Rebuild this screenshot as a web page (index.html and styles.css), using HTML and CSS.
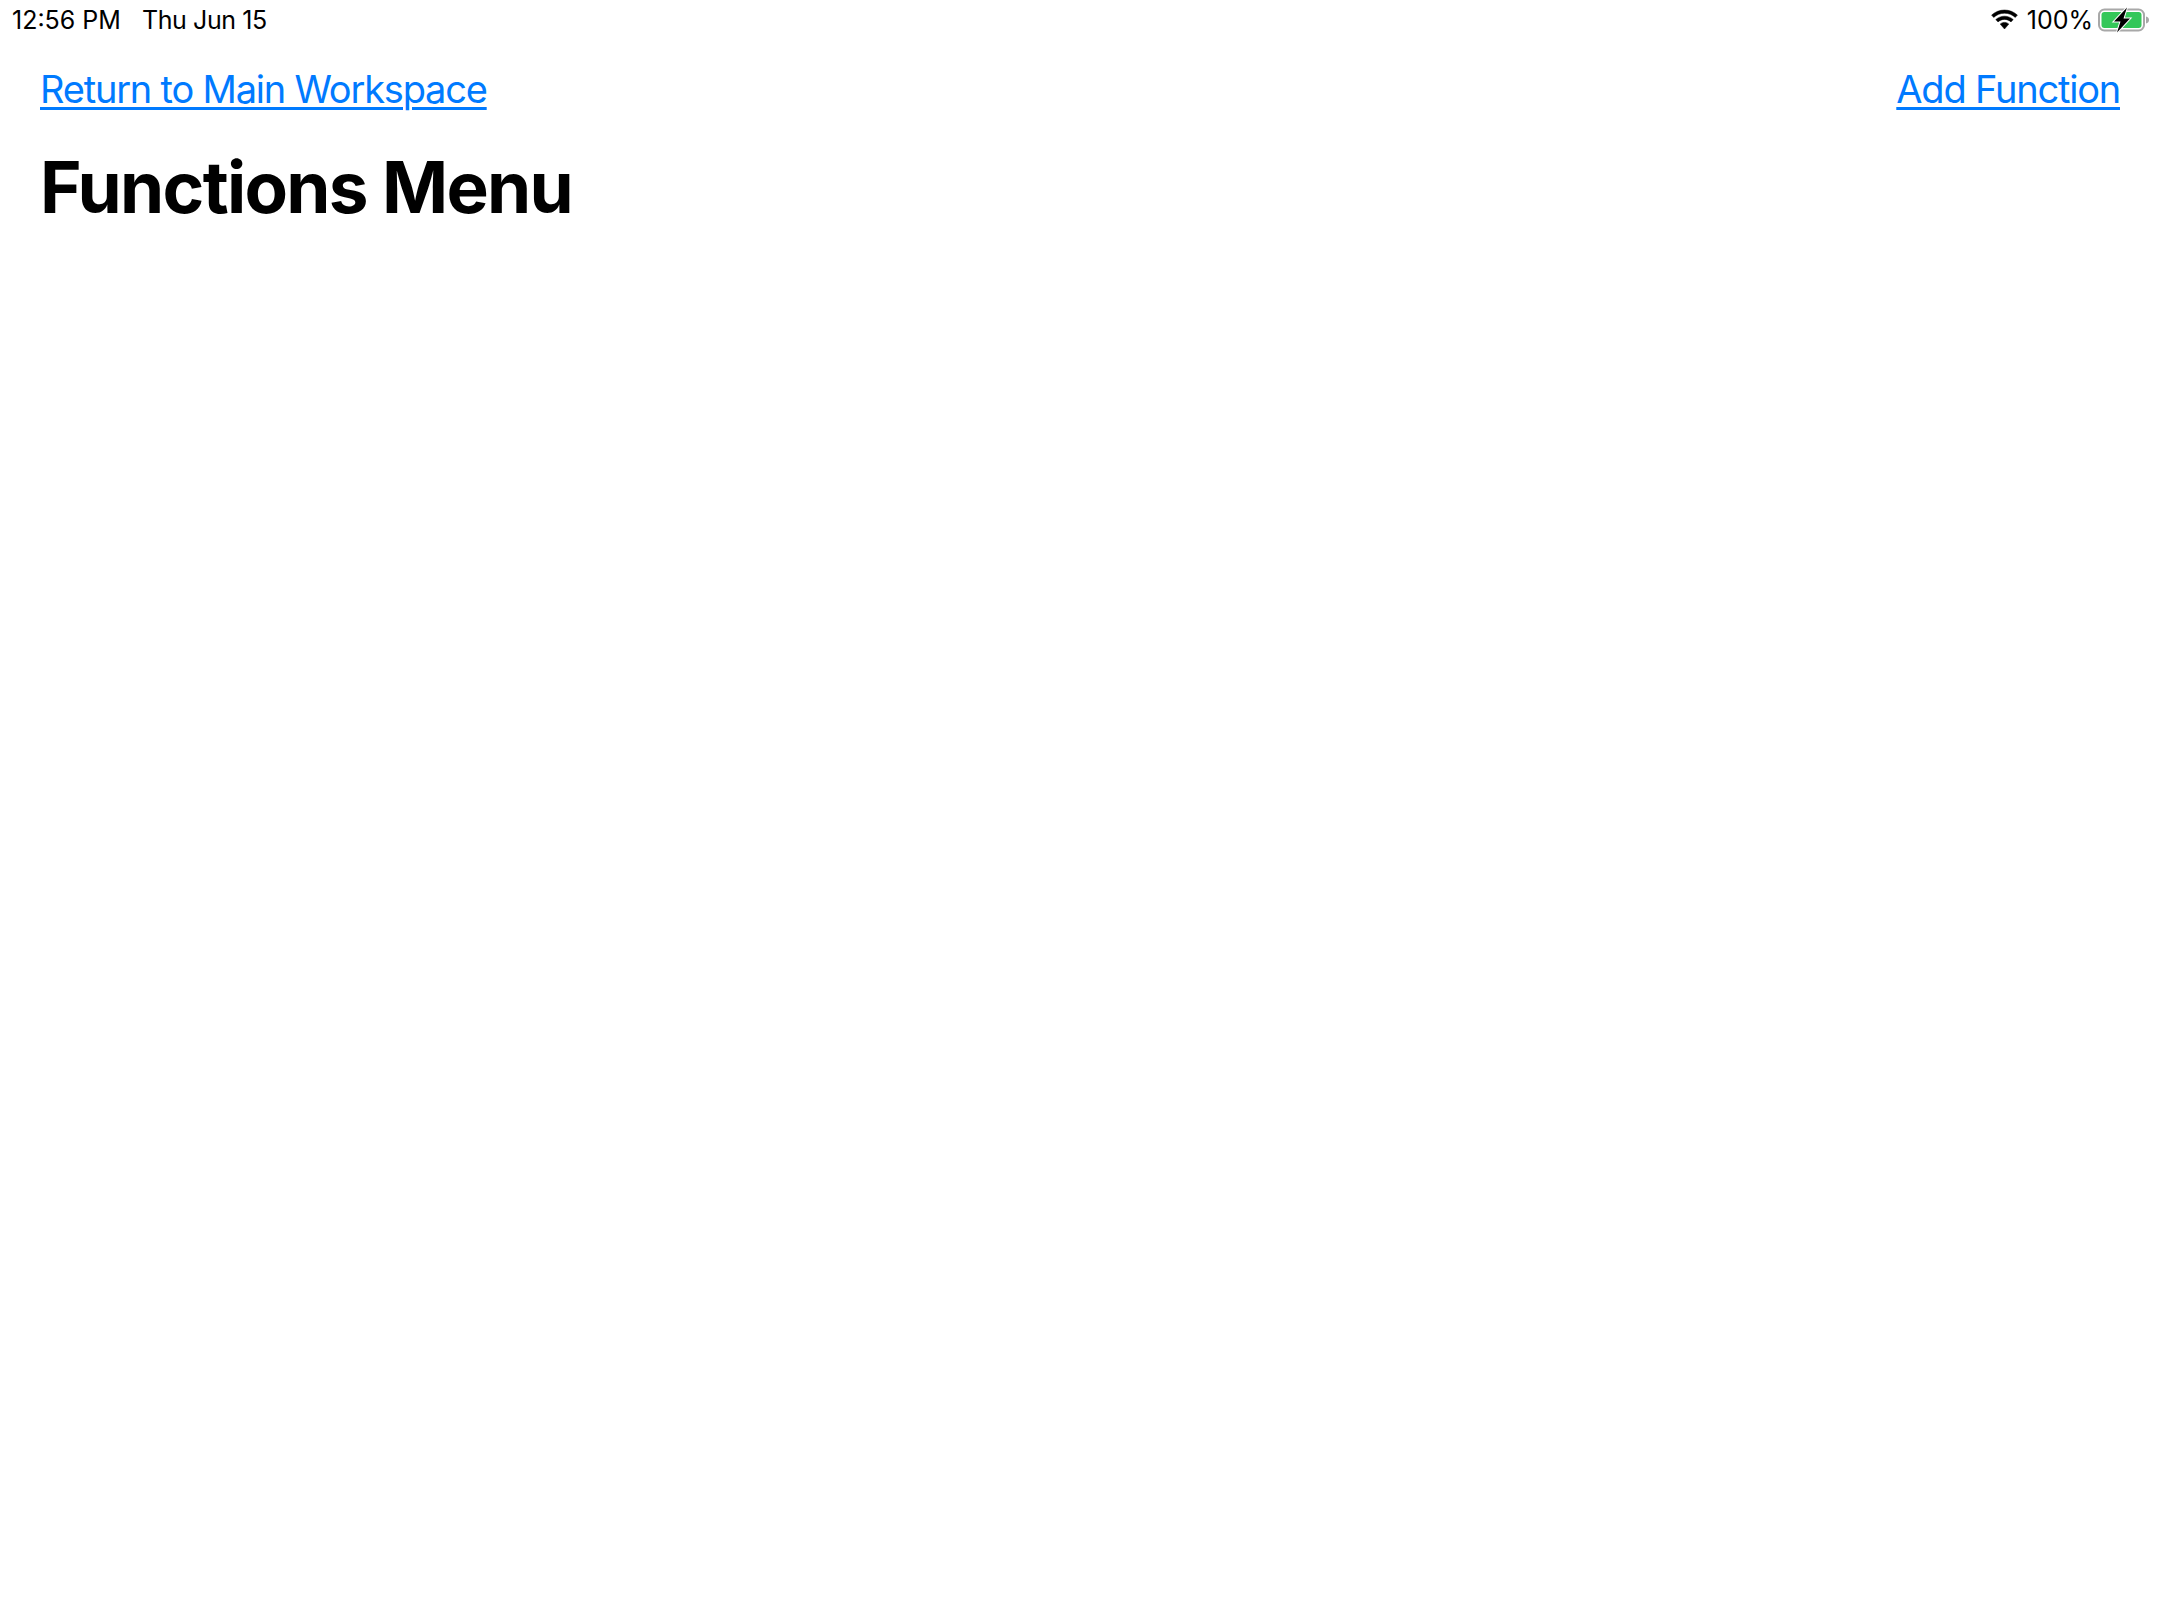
FILE: index.html
```html
<!DOCTYPE html>
<html lang="en">

<head>
  <meta charset="UTF-8">
  <meta name="viewport" content="width=device-width, initial-scale=1.0">
  <title>Functions Menu</title>
  <link rel="stylesheet" href="styles.css">
</head>

<body>

  <div class="status-bar">
    <div class="status-left">
      <span>12:56 PM</span>
      <span class="status-date">Thu Jun 15</span>
    </div>
    <div class="status-right">
      <svg class="wifi" viewBox="1.500 0 27 22" width="27" height="22">
        <g fill="#000" stroke="#000" stroke-width="0.500">
          <path d="M15 4.200c4.100 0 7.900 1.600 10.800 4.200l2.100-2.300C24.400 2.900 19.900 1 15 1S5.600 2.900 2.100 6.100l2.100 2.300C7.100 5.800 10.900 4.200 15 4.200z" />
          <path d="M15 10.400c2.500 0 4.800.9 6.500 2.500l2.200-2.300C21.400 8.500 18.300 7.200 15 7.200s-6.400 1.300-8.700 3.400l2.200 2.300c1.700-1.600 4-2.500 6.500-2.500z" />
          <path d="M15 13.400c-1.700 0-3.200.6-4.300 1.700L15 20l4.300-4.900c-1.100-1.100-2.600-1.700-4.300-1.700z" />
        </g>
      </svg>
      <span class="battery-text">100%</span>
      <svg class="battery" viewBox="0 0 52 26" width="52" height="26">
        <rect x="1" y="2.500" width="45" height="21" rx="5.500" fill="#fff" stroke="#a8a8a8" stroke-width="2" />
        <rect x="3.500" y="5" width="40" height="16" rx="3" fill="#34c759" />
        <path d="M48 9.500c2 .5 3 1.800 3 3.500s-1 3-3 3.500z" fill="#a8a8a8" />
        <path d="M29 .5 16 14.500h6.500L19 25.500 32 11.500h-6.500z" fill="#000" stroke="#fff" stroke-width="2" paint-order="stroke" />
      </svg>
    </div>
  </div>

  <div class="content">
    <div class="top-links">
      <a href="#">Return to Main Workspace</a>
      <a href="#">Add Function</a>
    </div>
    <h1>Functions Menu</h1>
  </div>

</body>

</html>
```

FILE: styles.css
```css
html,
body {
  height: 100%;
  margin: 0;
  padding: 0;
  background-color: #fff;
  font-family: "Inter", "Liberation Sans", sans-serif;
  color: #000;
}

.status-bar {
  display: flex;
  justify-content: space-between;
  align-items: center;
  height: 40px;
  padding: 0 10px 0 12px;
  font-size: 25px;
}

.status-left {
  display: flex;
  gap: 21px;
}

.status-date {
  letter-spacing: -0.4px;
}

.status-right {
  display: flex;
  align-items: center;
}

.battery-text {
  margin: 0 5px 0 9px;
}

.content {
  padding: 25px 40px 0;
}

.top-links {
  display: flex;
  justify-content: space-between;
  font-size: 38px;
  letter-spacing: -1.2px;
  line-height: 48px;
}

.top-links a {
  color: #007aff;
  text-decoration-thickness: 3px;
  text-underline-offset: 4px;
}

h1 {
  margin: 33px 0 0;
  font-size: 71px;
  letter-spacing: -1.7px;
  line-height: 82px;
  font-weight: 700;
}
```
